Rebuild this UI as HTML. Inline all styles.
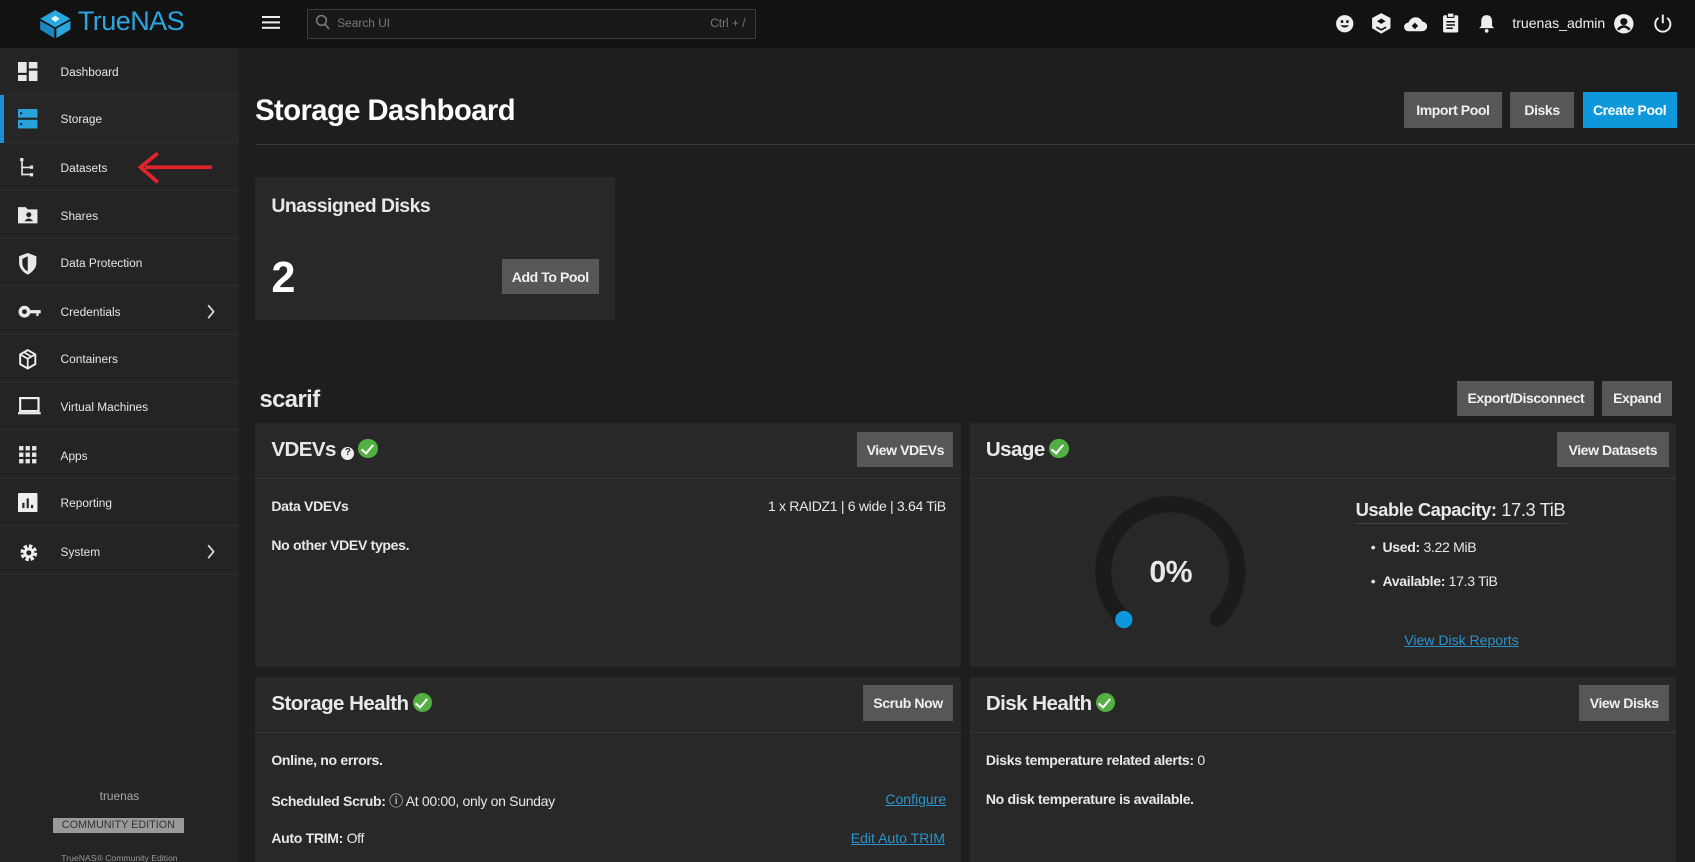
<!DOCTYPE html>
<html><head><meta charset="utf-8"><style>
*{margin:0;padding:0;box-sizing:border-box}
html,body{width:1695px;height:862px;overflow:hidden;background:#1e1e1e}
#root{zoom:1.081;position:relative;width:1568px;height:798px;overflow:hidden;font-family:"Liberation Sans",sans-serif;color:#e8e8e8;background:#1e1e1e}
.a{position:absolute}
.top{left:0;top:0;width:1568px;height:44px;background:#121212}
.side{left:0;top:44px;width:221px;height:760px;background:#242424}
.item{position:absolute;left:0;width:221px;height:44px;border-bottom:1px solid #2f2f2f;font-size:11px;color:#e6e6e6}
.item span{position:absolute;left:56px;top:16px}
.item svg{position:absolute;left:17px;top:13px}
.item .chev{position:absolute;left:191px;top:14px}
.btn{position:absolute;background:#575757;color:#f0f0f0;font-weight:bold;font-size:13px;letter-spacing:-.4px;display:flex;align-items:center;justify-content:center}
.card{position:absolute;background:#282828}
.h{position:absolute;font-weight:bold;letter-spacing:-.5px}
.t{position:absolute;font-size:13px;letter-spacing:-.3px}
.b{font-weight:bold}
.lnk{position:absolute;color:#2a95cc;text-decoration:underline;font-size:13px}
.ok{display:inline-block;width:18px;height:18px;border-radius:50%;background:#52b043;vertical-align:-2px;position:relative;margin-left:4px}
.ok:after{content:"";position:absolute;left:5px;top:3px;width:5px;height:9px;border:solid #fff;border-width:0 2px 2px 0;transform:rotate(40deg)}
.ico{fill:#e8e8e8}
</style></head><body><div id="root">
<div class="a top">
 <svg class="a" style="left:35px;top:8px" width="32" height="28" viewBox="0 0 32 28"><path d="M16 1L30 9 16 17 2 9Z" fill="#2aa7e0"/><path d="M2 11L15 18V27L2 19Z" fill="#1a86c0"/><path d="M30 11L17 18V27L30 19Z" fill="#2aa7e0"/><path d="M16 6l4 3-4 3-4-3z" fill="#dfe"/></svg>
 <div class="a" style="left:72px;top:6px;font-size:25px;color:#2aa7e0;letter-spacing:-.5px">TrueNAS</div>
 <div class="a" style="left:242px;top:15px;width:17px;height:2px;background:#eee;box-shadow:0 5px 0 #eee,0 10px 0 #eee"></div>
 <div class="a" style="left:284px;top:8px;width:415px;height:28px;border:1px solid #3b3b3b;background:#181818"></div>
 <svg class="a" style="left:291px;top:13px" width="14" height="16"><circle cx="6" cy="6" r="4.5" stroke="#777" fill="none" stroke-width="1.5"/><path d="M9 9l4 5" stroke="#777" stroke-width="1.5"/></svg>
 <div class="a" style="left:312px;top:15px;font-size:11px;color:#777">Search UI</div>
 <div class="a" style="left:657px;top:15px;font-size:11px;color:#777">Ctrl + /</div>
 <svg class="a" style="left:1235px;top:13px" width="18" height="18"><circle cx="9" cy="9" r="8" fill="#eee"/><circle cx="6.5" cy="7" r="1.3" fill="#111"/><circle cx="11.5" cy="7" r="1.3" fill="#111"/><path d="M5 10.5q4 4 8 0z" fill="#111"/></svg>
 <svg class="a" style="left:1268px;top:11px" width="19" height="21"><path d="M9.5 1L18 5.5V15L9.5 20 1 15V5.5Z" fill="#eee"/><path d="M9.5 6l4 2.5-4 2.5-4-2.5z" fill="#111"/><path d="M14 14l-4.5 2.5-4.5-2.5" stroke="#111" fill="none" stroke-width="1.5"/></svg>
 <svg class="a" style="left:1298px;top:13px" width="22" height="18"><path d="M5 16a4 4 0 010-8 7 7 0 0113-1 4.5 4.5 0 01-.5 9z" fill="#eee"/><path d="M11 8l3 3-3 3-3-3z" fill="#111"/></svg>
 <svg class="a" style="left:1334px;top:11px" width="16" height="20"><rect x="1" y="3" width="14" height="16" rx="1.5" fill="#eee"/><rect x="5" y="1" width="6" height="4" fill="#eee" stroke="#111"/><path d="M4 9h8M4 12h8M4 15h6" stroke="#111" stroke-width="1.4"/></svg>
 <svg class="a" style="left:1367px;top:12px" width="16" height="19"><path d="M8 2c3.5 0 5 2.5 5 6v4l2 2H1l2-2V8c0-3.5 1.5-6 5-6z" fill="#eee"/><circle cx="8" cy="16.5" r="1.7" fill="#eee"/></svg>
 <div class="a" style="left:1399px;top:14px;font-size:13px;color:#eee">truenas_admin</div>
 <svg class="a" style="left:1492px;top:12px" width="20" height="20"><circle cx="10" cy="10" r="9" fill="#eee"/><circle cx="10" cy="8" r="3.3" fill="#121212"/><path d="M4.5 15.5q5.5-6 11 0" stroke="#121212" stroke-width="2.4" fill="none"/></svg>
 <svg class="a" style="left:1528px;top:12px" width="20" height="20"><path d="M6 4.5a7 7 0 108 0" stroke="#eee" stroke-width="1.8" fill="none"/><path d="M10 1.5v8" stroke="#eee" stroke-width="1.8"/></svg>
</div>
<div class="a side">
 <div class="item" style="top:0"><svg width="18" height="18" class="ico"><rect x="0" y="0" width="8" height="10"/><rect x="10" y="0" width="8" height="6"/><rect x="10" y="8" width="8" height="10"/><rect x="0" y="12" width="8" height="6"/></svg><span>Dashboard</span></div>
 <div class="item" style="top:44px;background:#262626"><div class="a" style="left:0;top:0;width:4px;height:44px;background:#1e8fd0"></div><svg width="18" height="18"><rect x="0" y="0" width="18" height="8" fill="#2aa3dc"/><rect x="0" y="10" width="18" height="8" fill="#2aa3dc"/><rect x="2" y="3" width="2" height="2" fill="#123"/><rect x="2" y="13" width="2" height="2" fill="#123"/></svg><span>Storage</span></div>
 <div class="item" style="top:89px"><svg width="18" height="18" class="ico"><rect x="2" y="0" width="3" height="3"/><rect x="3" y="3" width="1.5" height="13"/><rect x="3" y="8" width="8" height="1.5"/><rect x="3" y="14.5" width="8" height="1.5"/><rect x="11" y="7" width="3" height="3"/><rect x="11" y="14" width="3" height="3"/></svg><span>Datasets</span></div>
 <div class="item" style="top:133px"><svg width="18" height="18" class="ico"><path d="M0 2h7l2 2h9v13H0z"/><circle cx="10" cy="9" r="2.3" fill="#242424"/><path d="M6 15q4-5 8 0z" fill="#242424"/></svg><span>Shares</span></div>
 <div class="item" style="top:177px"><svg width="18" height="20" class="ico"><path d="M9 0l8 3v6c0 5-4 9-8 11-4-2-8-6-8-11V3z"/><path d="M9 3v14c-3-1.5-5-4.5-5-8V5.5z" fill="#242424"/></svg><span>Data Protection</span></div>
 <div class="item" style="top:222px"><svg width="22" height="18" class="ico"><circle cx="6" cy="9" r="5.5"/><circle cx="6" cy="9" r="2.2" fill="#242424"/><rect x="10" y="7.5" width="11" height="3"/><rect x="17" y="10" width="2" height="3"/></svg><span>Credentials</span><svg class="chev" width="10" height="16"><path d="M2 2l5 6-5 6" stroke="#ddd" stroke-width="1.6" fill="none"/></svg></div>
 <div class="item" style="top:266px"><svg width="18" height="20"><path d="M9 1l7 4v9l-7 4-7-4V5z" stroke="#eee" stroke-width="1.8" fill="none"/><path d="M2 5l7 4 7-4M9 9v9M5.5 3l7 4" stroke="#eee" stroke-width="1.6" fill="none"/></svg><span>Containers</span></div>
 <div class="item" style="top:310px"><svg width="22" height="18"><rect x="2" y="1" width="17" height="12" stroke="#eee" stroke-width="2" fill="none"/><rect x="0" y="14" width="21" height="2" fill="#eee"/></svg><span>Virtual Machines</span></div>
 <div class="item" style="top:355px"><svg width="18" height="18" class="ico"><rect x="1" y="1" width="4" height="4"/><rect x="7" y="1" width="4" height="4"/><rect x="13" y="1" width="4" height="4"/><rect x="1" y="7" width="4" height="4"/><rect x="7" y="7" width="4" height="4"/><rect x="13" y="7" width="4" height="4"/><rect x="1" y="13" width="4" height="4"/><rect x="7" y="13" width="4" height="4"/><rect x="13" y="13" width="4" height="4"/></svg><span>Apps</span></div>
 <div class="item" style="top:399px"><svg width="18" height="18"><rect x="0" y="0" width="18" height="18" rx="1" fill="#eee"/><path d="M5 14V9M9 14V5M13 14v-3" stroke="#242424" stroke-width="2"/></svg><span>Reporting</span></div>
 <div class="item" style="top:444px"><svg width="20" height="20"><circle cx="10" cy="10" r="6" stroke="#eee" stroke-width="3.5" fill="none" stroke-dasharray="3 1.7"/><circle cx="10" cy="10" r="5" fill="#eee"/><circle cx="10" cy="10" r="2.3" fill="#242424"/></svg><span>System</span><svg class="chev" width="10" height="16"><path d="M2 2l5 6-5 6" stroke="#ddd" stroke-width="1.6" fill="none"/></svg></div>
 <div class="a" style="left:0;top:686px;width:221px;text-align:center;font-size:11px;color:#aaa">truenas</div>
 <div class="a" style="left:49px;top:713px;width:121px;height:14px;background:#9a9a9a;color:#333;font-size:10px;text-align:center;line-height:14px">COMMUNITY EDITION</div>
 <div class="a" style="left:0;top:745px;width:221px;text-align:center;font-size:8px;color:#999">TrueNAS® Community Edition</div>
</div>
<svg class="a" style="left:124px;top:140px" width="76" height="32"><path d="M72 15H10" stroke="#e0242c" stroke-width="3.5"/><path d="M22 2L6 15l16 14" stroke="#e0242c" stroke-width="3.5" fill="none"/></svg>

<div class="h" style="left:236px;top:88px;font-size:27px;color:#fff">Storage Dashboard</div>
<div class="a" style="left:236px;top:133px;width:1332px;height:1px;background:#3a3a3a"></div>
<div class="btn" style="left:1299px;top:85px;width:90px;height:33px">Import Pool</div>
<div class="btn" style="left:1397px;top:85px;width:59px;height:33px">Disks</div>
<div class="btn" style="left:1464px;top:85px;width:87px;height:33px;background:#0c98db;color:#fff">Create Pool</div>

<div class="card" style="left:236px;top:164px;width:333px;height:132px"></div>
<div class="h" style="left:251px;top:180px;font-size:18px">Unassigned Disks</div>
<div class="h" style="left:251px;top:235px;font-size:40px;color:#fff">2</div>
<div class="btn" style="left:464px;top:240px;width:90px;height:32px">Add To Pool</div>

<div class="h" style="left:240px;top:357px;font-size:22px">scarif</div>
<div class="btn" style="left:1348px;top:352px;width:127px;height:33px">Export/Disconnect</div>
<div class="btn" style="left:1482px;top:352px;width:65px;height:33px">Expand</div>

<div class="card" style="left:236px;top:391px;width:653px;height:226px"></div>
<div class="a" style="left:236px;top:442px;width:653px;height:1px;background:#363636"></div>
<div class="h" style="left:251px;top:405px;font-size:19px">VDEVs <span style="display:inline-block;width:12px;height:12px;border-radius:50%;background:#eee;color:#282828;font-size:9px;text-align:center;line-height:12px;vertical-align:1px">?</span><span class="ok"></span></div>
<div class="btn" style="left:793px;top:400px;width:89px;height:32px">View VDEVs</div>
<div class="t b" style="left:251px;top:461px">Data VDEVs</div>
<div class="t" style="left:600px;width:275px;text-align:right;top:461px">1 x RAIDZ1 | 6 wide | 3.64 TiB</div>
<div class="t b" style="left:251px;top:497px">No other VDEV types.</div>

<div class="card" style="left:897px;top:391px;width:653px;height:226px"></div>
<div class="a" style="left:897px;top:442px;width:653px;height:1px;background:#363636"></div>
<div class="h" style="left:912px;top:405px;font-size:19px">Usage<span class="ok"></span></div>
<div class="btn" style="left:1440px;top:400px;width:104px;height:32px">View Datasets</div>
<svg class="a" style="left:1005px;top:455px" width="152" height="152"><path d="M34 117A62 62 0 1 1 122 117" stroke="#1b1b1b" stroke-width="15" fill="none" stroke-linecap="round"/><circle cx="35" cy="118" r="8" fill="#0c98db"/></svg>
<div class="h" style="left:1040px;top:514px;width:86px;text-align:center;font-size:28px">0%</div>
<div class="a" style="left:1254px;top:462px;font-size:17px;letter-spacing:-.4px"><b>Usable Capacity:</b> 17.3 TiB</div>
<div class="a" style="left:1254px;top:484px;width:196px;height:1px;background:#444"></div>
<div class="t" style="left:1268px;top:499px">•&nbsp; <b>Used:</b> 3.22 MiB</div>
<div class="t" style="left:1268px;top:530px">•&nbsp; <b>Available:</b> 17.3 TiB</div>
<div class="lnk" style="left:1299px;top:585px">View Disk Reports</div>

<div class="card" style="left:236px;top:626px;width:653px;height:180px"></div>
<div class="a" style="left:236px;top:677px;width:653px;height:1px;background:#363636"></div>
<div class="h" style="left:251px;top:640px;font-size:19px">Storage Health<span class="ok"></span></div>
<div class="btn" style="left:798px;top:634px;width:84px;height:33px">Scrub Now</div>
<div class="t b" style="left:251px;top:696px">Online, no errors.</div>
<div class="t" style="left:251px;top:732px"><b>Scheduled Scrub:</b> ⓘ At 00:00, only on Sunday</div>
<div class="lnk" style="left:819px;top:732px">Configure</div>
<div class="t" style="left:251px;top:768px"><b>Auto TRIM:</b> Off</div>
<div class="lnk" style="left:787px;top:768px">Edit Auto TRIM</div>

<div class="card" style="left:897px;top:626px;width:653px;height:180px"></div>
<div class="a" style="left:897px;top:677px;width:653px;height:1px;background:#363636"></div>
<div class="h" style="left:912px;top:640px;font-size:19px">Disk Health<span class="ok"></span></div>
<div class="btn" style="left:1461px;top:634px;width:83px;height:33px">View Disks</div>
<div class="t" style="left:912px;top:696px"><b>Disks temperature related alerts:</b> 0</div>
<div class="t b" style="left:912px;top:732px">No disk temperature is available.</div>
</div></body></html>
